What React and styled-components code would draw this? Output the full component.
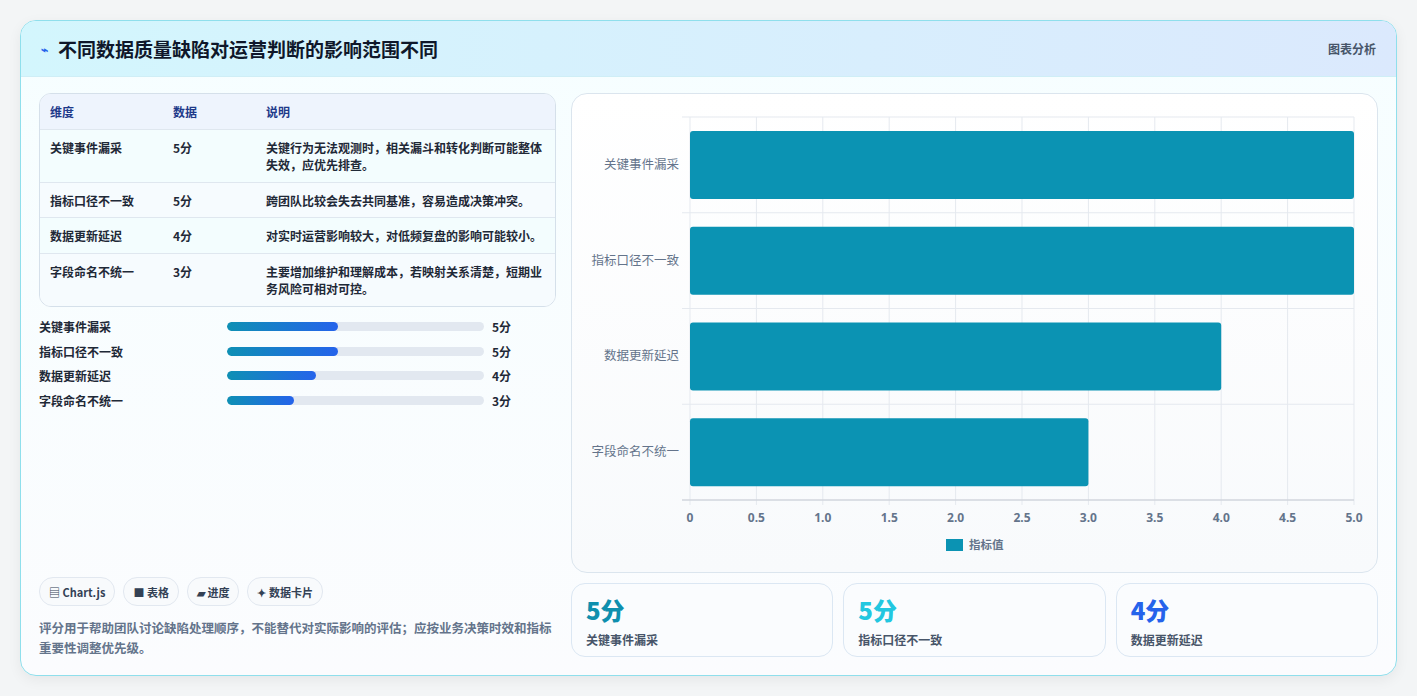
import React from 'react';
import styled, { createGlobalStyle } from 'styled-components';

const Global = createGlobalStyle`
  html, body { margin: 0; padding: 0; background: #eef1f3; }
  body { font-family: "Noto Sans CJK SC", "Noto Sans", sans-serif; }
`;

const rows = [
  { name: '关键事件漏采', score: 5, note: '关键行为无法观测时，相关漏斗和转化判断可能整体失效，应优先排查。' },
  { name: '指标口径不一致', score: 5, note: '跨团队比较会失去共同基准，容易造成决策冲突。' },
  { name: '数据更新延迟', score: 4, note: '对实时运营影响较大，对低频复盘的影响可能较小。' },
  { name: '字段命名不统一', score: 3, note: '主要增加维护和理解成本，若映射关系清楚，短期业务风险可相对可控。' },
];

const Page = styled.div`
  padding: 20px 20px 20px 20px;
  background: #f3f5f6;
  height: 696px;
  box-sizing: border-box;
`;
const Card = styled.div`
  height: 656px;
  box-sizing: border-box;
  border: 1px solid #8fdfec;
  border-radius: 16px;
  background: linear-gradient(180deg, #f6feff, #fbfcfe);
  overflow: hidden;
  display: flex;
  flex-direction: column;
  box-shadow: 0 4px 14px rgba(0,0,0,0.06);
`;
const Header = styled.div`
  height: 55px;
  display: flex;
  align-items: center;
  justify-content: space-between;
  padding: 0 20px 0 20px;
  background: linear-gradient(90deg, #d3f6fd, #dbe9fd);
  border-bottom: 1px solid #cfeef6;
`;
const Title = styled.h1`
  margin: 0;
  font-size: 19px;
  font-weight: 700;
  color: #0f172a;
  display: flex;
  align-items: center;
  gap: 10px;
`;
const Tag = styled.span`
  font-size: 12px;
  font-weight: 700;
  color: #475569;
`;
const Body = styled.div`
  flex: 1;
  display: grid;
  grid-template-columns: 517px 807px;
  gap: 15px;
  padding: 16px 18px 17px 18px;
`;
const Left = styled.div`
  display: flex;
  flex-direction: column;
`;
const Table = styled.div`
  border: 1px solid #d5e0ea;
  border-radius: 12px;
  overflow: hidden;
  background: #fbfcfe;
`;
const Row = styled.div`
  display: grid;
  grid-template-columns: 123px 93px 1fr;
  padding: ${p => (p.head ? '9px 10px 8px' : '9px 10px 8px')};
  background: ${p => (p.head ? '#eef4fd' : p.alt ? '#f6fbfe' : '#f3fdfe')};
  border-top: ${p => (p.head ? 'none' : '1px solid #dfe7ef')};
  font-size: 12px;
  line-height: 17.5px;
  font-weight: ${p => (p.head ? 700 : 600)};
  color: ${p => (p.head ? '#1e3a8a' : '#1f2937')};
`;
const Bars = styled.div`
  margin-top: 11px;
  display: flex;
  flex-direction: column;
  gap: 6px;
`;
const BarRow = styled.div`
  display: grid;
  grid-template-columns: 188px 257px 1fr;
  gap: 0;
  align-items: center;
  height: 18.5px;
  font-size: 12px;
  font-weight: 600;
  color: #1f2937;
  & > b { padding-left: 8px; font-weight: 700; }
`;
const Track = styled.div`
  height: 9px;
  border-radius: 5px;
  background: #e2e8f0;
  overflow: hidden;
`;
const Fill = styled.div`
  height: 100%;
  border-radius: 5px;
  background: linear-gradient(90deg, #0e90b4, #2563eb);
`;
const Chips = styled.div`
  margin-top: auto;
  display: flex;
  gap: 8px;
`;
const Chip = styled.span`
  height: 27px;
  padding: 0 9px;
  border: 1px solid #e2e8f0;
  border-radius: 14px;
  background: #f8fafc;
  font-size: 11px;
  font-weight: 700;
  color: #334155;
  display: flex;
  align-items: center;
  gap: 3px;
`;
const Note = styled.p`
  margin: 12px 0 0;
  font-size: 12.5px;
  line-height: 20px;
  font-weight: 600;
  color: #64748b;
`;
const Right = styled.div`
  display: flex;
  flex-direction: column;
  gap: 10px;
`;
const ChartBox = styled.div`
  height: 480px;
  box-sizing: border-box;
  border: 1px solid #dbe5ee;
  border-radius: 16px;
  background: linear-gradient(180deg, #ffffff, #f8fafc);
`;
const Stats = styled.div`
  display: grid;
  grid-template-columns: repeat(3, 1fr);
  gap: 10px;
`;
const Stat = styled.div`
  height: 74px;
  box-sizing: border-box;
  border: 1px solid #dbe7f3;
  border-radius: 14px;
  background: #fafcfe;
  padding: 10px 14px;
  & > div { font-size: 24px; font-weight: 800; color: ${p => p.c}; line-height: 32px; }
  & > span { font-size: 12px; font-weight: 600; color: #475569; }
`;

const Chart = () => {
  const x0 = 118, w = 664, top = 23, bottom = 406, step = w / 10;
  const band = (bottom - top) / 4;
  return (
    <svg width="807" height="480" style={{ display: 'block' }}>
      {Array.from({ length: 11 }).map((_, i) => (
        <line key={i} x1={x0 + i * step} x2={x0 + i * step} y1={top} y2={bottom + 5} stroke="#e5e9ef" />
      ))}
      {[0, 1, 2, 3, 4].map(i => (
        <line key={i} x1={x0 - 8} x2={x0 + w} y1={top + i * band} y2={top + i * band} stroke="#e5e9ef" />
      ))}
      <line x1={x0 - 8} x2={x0 + w} y1={bottom} y2={bottom} stroke="#c8ccd4" />
      {rows.map((r, i) => (
        <g key={r.name}>
          <rect x={x0} y={top + i * band + 14} width={r.score * 2 * step} height={68} rx="3" fill="#0b93b3" />
          <text x={x0 - 11} y={top + i * band + band / 2 + 4} textAnchor="end" fontSize="12.5" fill="#64748b">{r.name}</text>
        </g>
      ))}
      {Array.from({ length: 11 }).map((_, i) => (
        <text key={i} x={x0 + i * step} y={428} textAnchor="middle" fontSize="12" fontWeight="700" fill="#64748b" fontFamily="Noto Sans, sans-serif">
          {i === 0 ? '0' : (i / 2).toFixed(1)}
        </text>
      ))}
      <rect x="374" y="445" width="17" height="12" fill="#0b93b3" />
      <text x="397" y="455" fontSize="11.5" fontWeight="600" fill="#64748b">指标值</text>
    </svg>
  );
};

export default function App() {
  return (
    <Page>
      <Global />
      <Card>
        <Header>
          <Title><span style={{ color: '#2563eb', fontSize: 12 }}>⌁</span>不同数据质量缺陷对运营判断的影响范围不同</Title>
          <Tag>图表分析</Tag>
        </Header>
        <Body>
          <Left>
            <Table>
              <Row head><span>维度</span><span>数据</span><span>说明</span></Row>
              {rows.map((r, i) => (
                <Row key={r.name} alt={i % 2 === 1}>
                  <span>{r.name}</span><span>{r.score}分</span><span>{r.note}</span>
                </Row>
              ))}
            </Table>
            <Bars>
              {rows.map(r => (
                <BarRow key={r.name}>
                  <span>{r.name}</span>
                  <Track><Fill style={{ width: `${r.score * 8.64}%` }} /></Track>
                  <b>{r.score}分</b>
                </BarRow>
              ))}
            </Bars>
            <Chips>
              <Chip>▤ Chart.js</Chip>
              <Chip>■ 表格</Chip>
              <Chip>▰ 进度</Chip>
              <Chip>✦ 数据卡片</Chip>
            </Chips>
            <Note>评分用于帮助团队讨论缺陷处理顺序，不能替代对实际影响的评估；应按业务决策时效和指标重要性调整优先级。</Note>
          </Left>
          <Right>
            <ChartBox><Chart /></ChartBox>
            <Stats>
              <Stat c="#0e8fae"><div>5分</div><span>关键事件漏采</span></Stat>
              <Stat c="#22c7e0"><div>5分</div><span>指标口径不一致</span></Stat>
              <Stat c="#2563eb"><div>4分</div><span>数据更新延迟</span></Stat>
            </Stats>
          </Right>
        </Body>
      </Card>
    </Page>
  );
}
